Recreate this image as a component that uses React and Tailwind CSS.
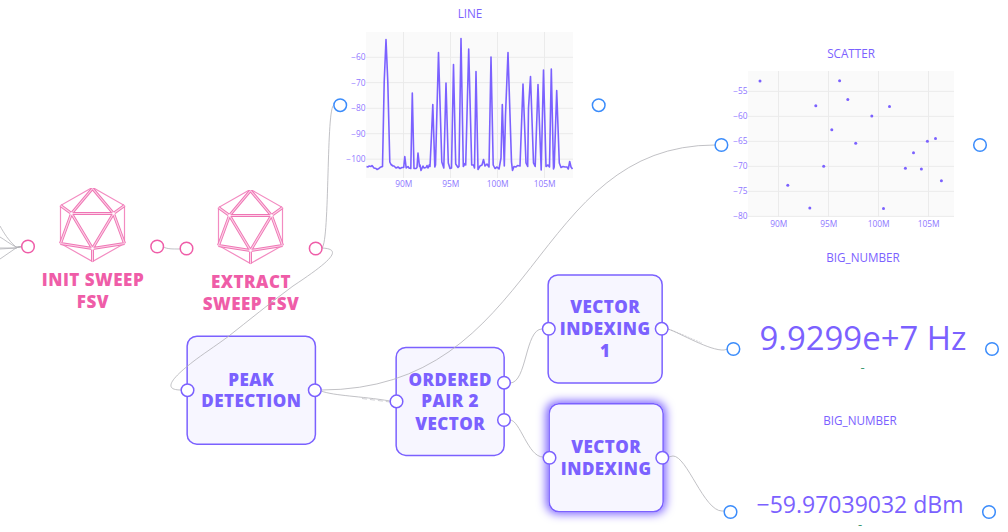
import React from 'react';
import clsx from 'clsx';

const edges = [
  'M22,247 L16,247 C8,240 4,233 0,226',
  'M22,247 L16,247 C10,244 5,240 0,237',
  'M22,246 L16,248 L0,248',
  'M22,246 L16,248 L0,249',
  'M22,246 L16,248 L0,259',
  'M163,247 C168,249 171,249 180,249',
  'M322,248 C330,240 326,106 334,105',
  'M322,248 C342,249 334,259 293,286 C270,303 248,321 228,336.7 C214,347 203,354 193,361.7 C172,378 162,390 181,390',
  'M321,390 C540,390 530,145 715,145',
  'M321,391 C335,396 360,396 390,401',
  'M510,383 C527,383 525,329 542,329',
  'M510,420 C520,420 528,457 543,457',
  'M668,329 C680,333 710,351 724,350 L728,349',
  'M668,457 L673,456 C687,456 704,511 722,511 L728,511',
];

const linePoints = [
  [366.5, 166.5], [368, 167], [369, 166], [371, 166.5], [372, 165.5], [374, 168], [376, 168.5], [377, 169.5],
  [379, 168.5], [380, 167.5], [381, 167], [382.5, 166.5], [384.2, 82], [386, 39.5], [387.8, 82], [389.8, 162], [391, 164.5],
  [393, 166], [394, 166], [396, 168], [398, 167], [400, 168.5], [402, 167.5], [403.7, 167.5], [404.8, 156.5],
  [406.2, 168], [408, 166.5], [409, 168], [410.8, 168.5], [412.3, 93], [414, 168.5], [416, 168.5], [417, 167.5],
  [418, 153], [419.5, 166.5], [420, 165], [421, 170.5], [423, 166], [424, 168], [426, 167.5], [427, 165.5],
  [428, 168], [429.5, 164.5], [430, 166.5], [431.5, 135], [432.8, 104.5], [434.8, 167], [435.5, 165], [438.5, 52.5],
  [441.8, 162], [443.8, 168], [446, 83], [448.3, 163], [450, 168.5], [451.5, 168], [453.5, 64.5], [455.7, 164],
  [458, 167.5], [459, 166.5], [461, 38.5], [463.3, 166.5], [465, 163.5], [465.7, 165], [468.7, 49], [471.7, 165],
  [473.5, 165], [474.5, 168], [476, 71.5], [478, 169.5], [480, 166], [482, 165], [483.5, 159.5], [485, 166],
  [487, 164], [489, 167], [491, 57], [493.2, 165], [495, 168.5], [497, 167], [499, 169], [501, 158],
  [502.3, 104.5], [504.3, 166], [505.5, 115], [508, 52.5], [511.5, 162], [512.5, 170.5], [514, 166.5], [516, 167],
  [517.5, 165.5], [520, 166], [523, 84], [526, 163], [527.7, 166.5], [528.5, 108], [530.5, 76.5], [533.5, 163],
  [535.2, 166.5], [538, 84.5], [541.2, 170], [543.5, 70], [546, 166.5], [548, 165], [549.5, 167], [551.3, 69],
  [553.5, 169], [554.2, 167], [556.7, 90.5], [559.3, 163], [561, 167.5], [563, 166.5], [565, 167], [567, 167],
  [568.3, 169], [569.7, 161.5], [571, 167], [572.5, 169],
];

const scatterPoints = [
  [760, 80.9], [839.6, 80.7], [847.8, 99.6], [815.8, 105.8], [889.5, 106.5], [871.8, 116], [831.8, 129.7],
  [855.7, 143.2], [927.4, 141.3], [935.5, 138.5], [913.5, 152.7], [823.7, 166.3], [905.4, 168.3], [921.4, 168.9],
  [941.4, 180.7], [787.8, 185.2], [809.8, 207.9], [883.5, 208.4],
];

const lineTicks = {
  x: [['90M', 403.5], ['95M', 450.5], ['100M', 497.5], ['105M', 544.5]],
  y: [['−60', 57.3], ['−70', 82.6], ['−80', 108.3], ['−90', 133.7], ['−100', 159.2]],
};

const scatterTicks = {
  x: [['90M', 778.5], ['95M', 828.5], ['100M', 878.5], ['105M', 928.5]],
  y: [['−55', 91.4], ['−60', 116.4], ['−65', 141.4], ['−70', 166.4], ['−75', 191.4], ['−80', 216.4]],
};

const handles = [
  ['pink', 28, 246.5], ['pink', 157.2, 246.5], ['pink', 186.5, 248.5], ['pink', 315.7, 248.5],
  ['blue', 340.2, 105.2], ['blue', 598.7, 105.2], ['blue', 721.4, 145], ['blue', 980, 145],
  ['violet', 187.5, 390.2], ['violet', 314.8, 390.2], ['violet', 396.5, 401.4], ['violet', 504, 382.7],
  ['violet', 504, 420], ['violet', 548.8, 328.8], ['violet', 661.7, 328.8], ['violet', 549.5, 457.8],
  ['violet', 662.3, 457.8], ['blue', 733.4, 349], ['blue', 992, 349], ['blue', 730.5, 512], ['blue', 989, 512],
];

const handleColors = { pink: '#ef5da8', blue: '#3b8cfb', violet: '#7b61ff' };

function Chart({ x, y, width, height, ticks, labelY, children }) {
  return (
    <g>
      <rect x={x} y={y} width={width} height={height} fill="#fafafa" />
      {ticks.x.map(([label, pos]) => (
        <g key={label}>
          <line x1={pos} x2={pos} y1={y} y2={y + height} stroke="#ebebeb" />
          <text x={pos + 0.2} y={labelY} textAnchor="middle" fontSize="8.4" fill="#8f78ff">{label}</text>
        </g>
      ))}
      {ticks.y.map(([label, pos]) => (
        <g key={label}>
          <line x1={x} x2={x + width} y1={pos} y2={pos} stroke="#ebebeb" />
          <text x={x - 0.5} y={pos + 3} textAnchor="end" fontSize="8.4" fill="#8f78ff">{label}</text>
        </g>
      ))}
      {children}
    </g>
  );
}

function Icosahedron() {
  const inner =
    'M33,1 L12,26 L54,26 Z M1,18 L12,26 L1,56 M65,18 L54,26 L65,56 M12,26 L33,61 L54,26 M1,56 L33,61 L65,56 M33,61 V74';
  return (
    <svg width="68" height="76" viewBox="-0.5 0.5 68 76" fill="none">
      <path d="M31,1 L1,18 V56 L33,74 L65,56 V18 L35,1 Z" stroke="#f38bc1" strokeWidth="1.2" />
      <path d={inner} stroke="#ef76b5" strokeWidth="3" strokeLinejoin="bevel" />
      <path d={inner} stroke="#fcd3e7" strokeWidth="1.1" strokeLinejoin="bevel" />
      {[[12, 26], [54, 26], [33, 61]].map(([cx, cy]) => (
        <circle key={cx} cx={cx} cy={cy} r="1.6" fill="#fff" stroke="#f6a2cd" strokeWidth="0.6" />
      ))}
    </svg>
  );
}

function SweepNode({ className, children }) {
  return (
    <div className={clsx('absolute flex w-[130px] flex-col items-center', className)}>
      <Icosahedron />
      <div className="mt-[5px] text-center text-[17px] leading-[22px] font-extrabold tracking-[0.5px] text-[#ef5da8]">
        {children}
      </div>
    </div>
  );
}

// Blocks are sized for 100% zoom and shown at 75%
function Block({ className, children }) {
  return (
    <div
      className={clsx(
        'absolute flex h-[146px] origin-top-left translate-x-[0.4px] scale-75 items-center justify-center rounded-[14px] border-2 border-[#7b61ff] bg-[#7b61ff]/6 text-center text-[22.7px] leading-[29.33px] font-extrabold tracking-[0.6px] text-[#7b61ff]',
        className
      )}
    >
      <div>{children}</div>
    </div>
  );
}

function Title({ className, children }) {
  return (
    <div className={clsx('absolute w-[120px] text-center text-[11.7px] leading-4 text-[#7b61ff]', className)}>
      {children}
    </div>
  );
}

export default function App() {
  return (
    <div className="h-[532px] w-[1008px] bg-white">
      <div className="relative h-[526px] w-full overflow-hidden font-['Open_Sans',sans-serif]">
        {/* Sweep instruments */}
        <SweepNode className="left-[28px] top-[188px]">INIT SWEEP<br />FSV</SweepNode>
        <SweepNode className="left-[186px] top-[190px]">EXTRACT<br />SWEEP FSV</SweepNode>

        {/* Processing blocks */}
        <Block className="left-[186px] top-[335px] w-[173px] translate-y-[0.4px]">PEAK<br />DETECTION</Block>
        <Block className="left-[395px] top-[346px] w-[146px] translate-y-[0.7px]">ORDERED<br />PAIR 2<br />VECTOR</Block>
        <Block className="left-[547px] top-[274px] w-[154px] translate-y-[0.2px]">VECTOR<br />INDEXING<br />1</Block>
        <Block className="left-[548px] top-[403px] w-[154px] translate-y-0 shadow-[0_0_13px_2px_#7b61ff]">
          VECTOR<br />INDEXING
        </Block>

        {/* Connections and charts */}
        <svg className="absolute inset-0" width="1008" height="526" viewBox="0 0 1008 526">
          <g fill="none" stroke="#b1b1b7" strokeOpacity="0.8">
            {edges.map(d => <path key={d} d={d} />)}
            <path d="M668,329 C680,333 692,339 702,343" strokeDasharray="2 1" strokeOpacity="0.5" />
            <path d="M362,398.5 L390,402" strokeDasharray="5 3" strokeOpacity="0.6" />
          </g>

          <Chart x={366} y={32} width={207} height={146} ticks={lineTicks} labelY={187}>
            <polyline
              points={linePoints.map(p => p.join(',')).join(' ')}
              fill="none"
              stroke="#7b61ff"
              strokeWidth="1.6"
              strokeLinejoin="round"
            />
          </Chart>

          <Chart x={748} y={71} width={206} height={146} ticks={scatterTicks} labelY={227}>
            {scatterPoints.map(([cx, cy]) => (
              <circle key={`${cx}-${cy}`} cx={cx} cy={cy} r="1.5" fill="#7b61ff" />
            ))}
          </Chart>

          {handles.map(([color, cx, cy]) => (
            <circle
              key={`${cx}-${cy}`}
              cx={cx}
              cy={cy}
              r="6.3"
              fill="#fff"
              stroke={handleColors[color]}
              strokeWidth="1.5"
            />
          ))}

          {/* Big number readouts */}
          <g textAnchor="middle" fill="#7b61ff">
            <text x="863" y="350" fontSize="33.5" textLength="207" lengthAdjust="spacingAndGlyphs">9.9299e+7 Hz</text>
            <text x="860" y="513" fontSize="23.6" textLength="207" lengthAdjust="spacingAndGlyphs">−59.97039032 dBm</text>
            <text x="862.5" y="372" fontSize="13" fill="#3d9970">-</text>
            <text x="860" y="529" fontSize="13" fill="#3d9970">-</text>
          </g>
        </svg>

        <Title className="left-[410px] top-[5px]">LINE</Title>
        <Title className="left-[791px] top-[45px]">SCATTER</Title>
        <Title className="left-[803px] top-[249px]">BIG_NUMBER</Title>
        <Title className="left-[800px] top-[412px]">BIG_NUMBER</Title>
      </div>
    </div>
  );
}
